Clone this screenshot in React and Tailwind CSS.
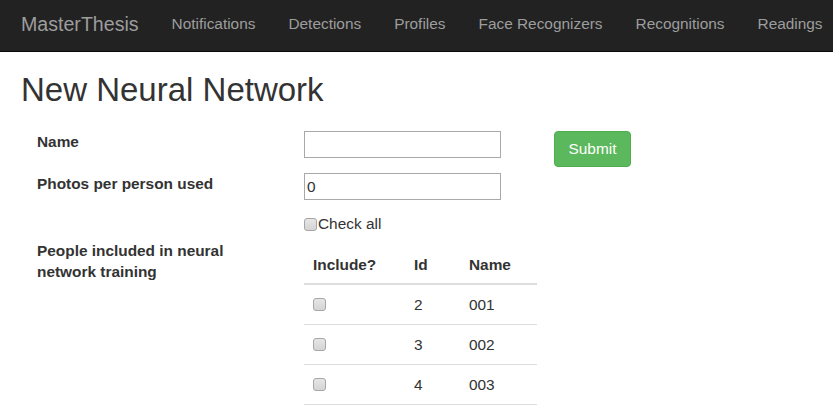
import React from "react";

const NAV_LINKS = [
  "Notifications",
  "Detections",
  "Profiles",
  "Face Recognizers",
  "Recognitions",
  "Readings",
];

const PEOPLE = [
  { id: 2, name: "001" },
  { id: 3, name: "002" },
  { id: 4, name: "003" },
];

// Old-style grey checkbox as drawn by the browser in the screenshot
const Box = () => (
  <span className="inline-block w-[13px] h-[13px] rounded-[3px] border border-[#a6a6a6] bg-gradient-to-b from-[#e6e6e6] to-[#d4d4d4] shrink-0" />
);

const Navbar = () => (
  <nav className="h-[52px] pb-[3px] bg-[#222222] border-b border-[#080808] flex items-center text-[#9d9d9d] whitespace-nowrap overflow-hidden">
    <span className="pl-[21px] pr-[16.5px] text-[19.6px]">MasterThesis</span>
    {NAV_LINKS.map((link) => (
      <span key={link} className="px-[16.5px] text-[15.4px]">
        {link}
      </span>
    ))}
  </nav>
);

const FormRow = ({ label, children, className = "" }) => (
  <div className={`flex items-start ${className}`}>
    <div className="w-[267px] shrink-0">
      <div className="w-[220px] font-bold leading-[21px]">{label}</div>
    </div>
    {children}
  </div>
);

const PeopleTable = () => (
  <div className="w-[233px] mt-[3px]">
    <div className="flex h-[42px] pt-[3px] items-center border-b-2 border-[#dddddd] font-bold">
      <div className="w-[101px] pl-[9px]">Include?</div>
      <div className="w-[55px] pl-[9px]">Id</div>
      <div className="pl-[9px]">Name</div>
    </div>
    {PEOPLE.map((p) => (
      <div
        key={p.id}
        className="flex h-[40px] items-center border-b border-[#dddddd]"
      >
        <div className="w-[101px] pl-[9px] flex">
          <Box />
        </div>
        <div className="w-[55px] pl-[9px]">{p.id}</div>
        <div className="pl-[9px]">{p.name}</div>
      </div>
    ))}
  </div>
);

export default function App() {
  return (
    <div className="w-[833px] h-[408px] overflow-hidden bg-white text-[#333333] text-[15.4px] leading-[22px] font-['Liberation_Sans',Arial,sans-serif]">
      <Navbar />

      <main className="px-[21px]">
        <h1 className="mt-[20px] text-[33px] leading-[1.1]">
          New Neural Network
        </h1>

        <form className="mt-[23px] pl-[16px]">
          <FormRow label="Name">
            <input
              type="text"
              className="w-[197px] h-[27px] border border-[#a9a9a9] outline-none px-[2px]"
            />
            <button
              type="button"
              className="ml-[53px] w-[77px] h-[36px] rounded-[4px] bg-[#5cb85c] border border-[#4cae4c] text-white"
            >
              Submit
            </button>
          </FormRow>

          <FormRow label="Photos per person used" className="mt-[6px]">
            <input
              type="text"
              defaultValue="0"
              className="w-[197px] h-[27px] border border-[#a9a9a9] outline-none px-[2px]"
            />
          </FormRow>

          <FormRow label="" className="mt-[13px]">
            <label className="flex items-center h-[22px]">
              <Box />
              <span className="ml-[1px]">Check all</span>
            </label>
          </FormRow>

          <FormRow
            label="People included in neural network training"
            className="mt-[5px]"
          >
            <PeopleTable />
          </FormRow>
        </form>
      </main>
    </div>
  );
}
